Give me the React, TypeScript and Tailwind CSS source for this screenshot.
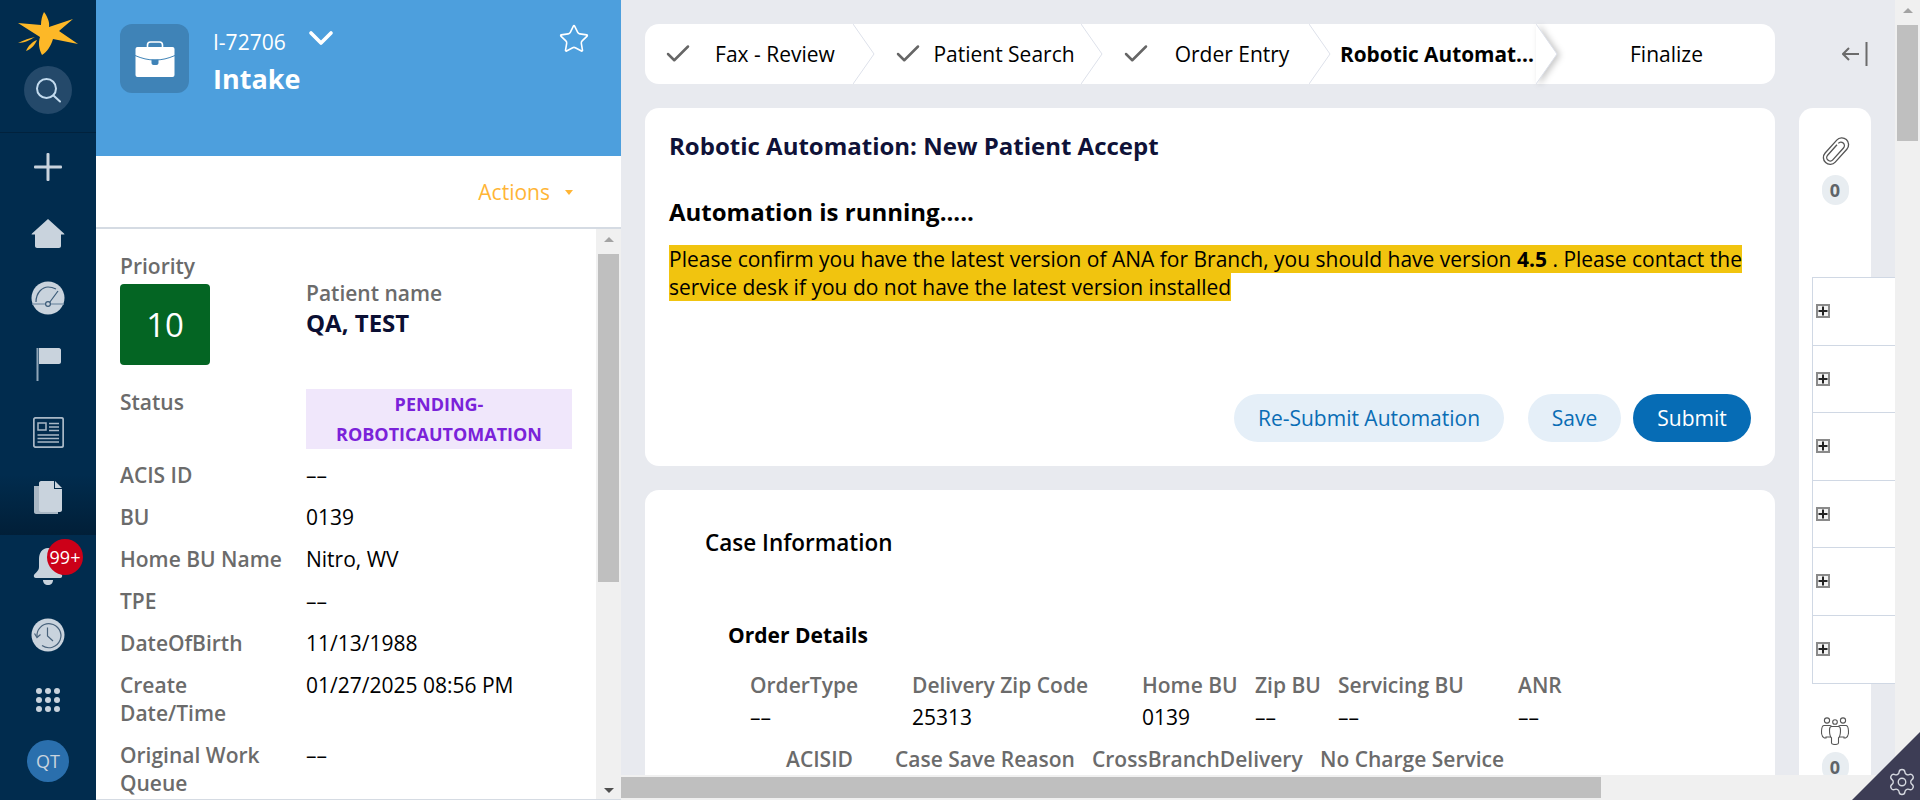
import { Check, ChevronDown, Settings, Star } from "lucide-react"

const navIcon = "#c9d3dd"

function Logo() {
  return (
    <svg width="96" height="66" viewBox="0 0 96 66" fill="#fdb827">
      <path d="M44 12C47 16 50 22 49 27L73 19L59 31L78 44L53 39C51 46 47 52 42 55C39 49 38 43 40 37L18 23L41 25C41 20 42 16 44 12Z" />
      <path d="M18 43C24 40 30 38 35 37C30 40 24 43 18 43Z" />
      <path d="M26 51C28 46 32 42 37 40C35 45 31 49 26 51Z" />
    </svg>
  )
}

function SearchIcon() {
  return (
    <svg width="26" height="26" viewBox="0 0 26 26" fill="none" stroke="#c3dbee" strokeWidth="2">
      <circle cx="11.5" cy="11.5" r="9.5" />
      <path d="M18.5 18.5L25 24.5" strokeLinecap="round" />
    </svg>
  )
}

function PlusIcon() {
  return (
    <svg width="28" height="28" viewBox="0 0 28 28" fill={navIcon}>
      <rect x="12.5" y="0" width="3" height="28" rx="1" />
      <rect x="0" y="12.5" width="28" height="3" rx="1" />
    </svg>
  )
}

function HomeIcon() {
  return (
    <svg width="34" height="29" viewBox="0 0 34 29" fill={navIcon}>
      <path d="M17 0L33 14.5L33.5 15.5H30V27C30 28 29 29 28 29H6C5 29 4 28 4 27V15.5H0.5L1 14.5Z" />
    </svg>
  )
}

function GaugeIcon() {
  return (
    <svg width="34" height="34" viewBox="0 0 34 34">
      <circle cx="17" cy="17" r="16.5" fill={navIcon} />
      <path d="M5 21C5 11 12 6 17 6C20 6 23 7 25 8" fill="none" stroke="#3a5a78" strokeWidth="1.2" />
      <path d="M1 23H33" stroke="#7f96ab" strokeWidth="1.4" />
      <path d="M18.5 21.5L27 10" stroke="#3a5a78" strokeWidth="1.2" />
      <circle cx="17" cy="23" r="2.4" fill={navIcon} stroke="#3a5a78" strokeWidth="1.2" />
    </svg>
  )
}

function FlagIcon() {
  return (
    <svg width="26" height="33" viewBox="0 0 26 33">
      <rect x="0.5" y="0" width="2" height="33" fill="#8fa5b8" />
      <path d="M3 0H23C24 0 25 1 25 2V14C25 15 24 16 23 16H3Z" fill={navIcon} />
    </svg>
  )
}

function NewsIcon() {
  return (
    <svg width="31" height="31" viewBox="0 0 31 31" fill="none" stroke="#a9b8c6" strokeWidth="1.5">
      <rect x="0.8" y="0.8" width="29.4" height="29.4" rx="2" strokeWidth="1.8" />
      <rect x="5" y="6" width="8" height="7" />
      <path d="M16 6.5H26M16 10H26M16 13.5H26M4.5 18H26M4.5 21.5H26M4.5 25H26" />
    </svg>
  )
}

function DocsIcon() {
  return (
    <svg width="29" height="33" viewBox="0 0 29 33">
      <path d="M0 5H6V29H24V33H2C1 33 0 32 0 31Z" fill="#a9b7c4" />
      <path d="M5 2C5 1 6 0 7 0H20V8H28V29C28 30 27 31 26 31H7C6 31 5 30 5 29Z" fill={navIcon} />
      <path d="M21 0L28 7H21Z" fill={navIcon} />
    </svg>
  )
}

function BellIcon() {
  return (
    <svg width="30" height="38" viewBox="0 0 30 38" fill={navIcon}>
      <path d="M15 0C21 0 24 5 24 11V19C24 23 28 25 29 27C29.5 28.5 29 30 27 30H3C1 30 0.5 28.5 1 27C2 25 6 23 6 19V11C6 5 9 0 15 0Z" />
      <path d="M10 32H20C20 35 18 37 15 37C12 37 10 35 10 32Z" />
    </svg>
  )
}

function HistoryIcon() {
  return (
    <svg width="34" height="34" viewBox="0 0 34 34">
      <circle cx="17" cy="17" r="16.5" fill={navIcon} />
      <path d="M6 19A12 12 0 1 1 11 27.5" fill="none" stroke="#48627b" strokeWidth="1.2" />
      <path d="M3.5 15.5L6 19.5L9.5 16.5" fill="none" stroke="#48627b" strokeWidth="1.2" />
      <path d="M16.5 9.5V18L22 23" fill="none" stroke="#48627b" strokeWidth="1.2" />
    </svg>
  )
}

function DotsIcon() {
  return (
    <svg width="26" height="26" viewBox="0 0 26 26" fill={navIcon}>
      {[4, 13, 22].map((y) =>
        [4, 13, 22].map((x) => <circle key={`${x}-${y}`} cx={x} cy={y} r="3" />),
      )}
    </svg>
  )
}

function Briefcase() {
  return (
    <svg width="40" height="36" viewBox="0 0 40 36">
      <path d="M12.5 6V4C12.5 2 14 1 15.5 1H24.5C26 1 27.5 2 27.5 4V6" fill="none" stroke="#fff" strokeWidth="1.6" />
      <rect x="0.5" y="6" width="39" height="30" rx="2" fill="#fff" />
      <path d="M0 14.5C7 17.5 13 19 20 19C27 19 33 17.5 40 14.5" fill="none" stroke="#3f83b7" strokeWidth="1" />
      <path d="M16.5 18.5H23.5V22C23.5 23 22.5 24 21.5 24H18.5C17.5 24 16.5 23 16.5 22Z" fill="#3f83b7" />
    </svg>
  )
}

function Paperclip() {
  return (
    <svg width="32" height="32" viewBox="0 0 24 24" fill="none" stroke="#555" strokeWidth="1">
      <g transform="rotate(42 12 12)">
        <path d="M9.5 7V17.5A2.6 2.6 0 0 0 14.7 17.5V5.5A2.6 2.6 0 0 0 9.5 5.5" />
        <path d="M7 6V17.5A5.1 5.1 0 0 0 17.2 17.5V4.5A5.1 5.1 0 0 0 7 4.5V6" />
      </g>
    </svg>
  )
}

function People() {
  return (
    <svg width="28" height="28" viewBox="0 0 28 28" fill="#fff" stroke="#555" strokeWidth="1.1">
      <circle cx="6" cy="3.5" r="2.6" />
      <circle cx="22" cy="3.5" r="2.6" />
      <circle cx="14" cy="5" r="2.3" />
      <path d="M3 8.5H9C10 8.5 10.5 9 10.5 10V20H5V21H3.5C1.5 20 0.5 18 0.5 15.5C0.5 11 1 8.5 3 8.5Z" />
      <path d="M25 8.5H19C18 8.5 17.5 9 17.5 10V20H23V21H24.5C26.5 20 27.5 18 27.5 15.5C27.5 11 27 8.5 25 8.5Z" />
      <path d="M10.5 9.5H17.5C19 9.5 19.5 11 19.5 13C19.5 17 18.5 20 17.5 21V26C17.5 27 16.5 27.5 14 27.5C11.5 27.5 10.5 27 10.5 26V21C9.5 20 8.5 17 8.5 13C8.5 11 9 9.5 10.5 9.5Z" />
    </svg>
  )
}

function PlusBox() {
  return (
    <div className="flex h-[14px] w-[14px] items-center justify-center border-2 border-[#8a8a8a] bg-[#f2f2f2]">
      <svg width="10" height="10" viewBox="0 0 10 10" fill="#222">
        <rect x="4" y="0.5" width="2" height="9" />
        <rect x="0.5" y="4" width="9" height="2" />
      </svg>
    </div>
  )
}

function ArrowUp() {
  return <div className="h-0 w-0 border-x-[5px] border-b-[5px] border-x-transparent border-b-[#a3a3a3]" />
}

function ArrowDown() {
  return <div className="h-0 w-0 border-x-[5px] border-t-[5px] border-x-transparent border-t-[#505050]" />
}

function Chevron({ shadow = false }: { shadow?: boolean }) {
  return (
    <svg
      width="22"
      height="60"
      viewBox="0 0 22 60"
      className={`absolute top-0 right-0 z-10 ${shadow ? "drop-shadow-[3px_1px_3px_rgba(0,0,0,0.22)]" : ""}`}
    >
      <path d="M0 0L21 30L0 60" fill="#fff" stroke="#dde1ea" strokeWidth="1" />
    </svg>
  )
}

function Step({ label, width }: { label: string; width: string }) {
  return (
    <div className={`relative flex h-full items-center pl-[18px] ${width}`}>
      <Check size={30} strokeWidth={2} className="shrink-0 text-[#666666]" />
      <span className="flex-1 pr-[18px] text-center whitespace-nowrap">{label}</span>
      <Chevron />
    </div>
  )
}

function Badge() {
  return (
    <div className="mt-[7px] flex h-[30px] w-[27px] items-center justify-center rounded-full bg-[#e8edf1] text-[18px] font-bold text-[#5f6468]">
      0
    </div>
  )
}

const details: { label: string[]; value: string }[] = [
  { label: ["ACIS ID"], value: "––" },
  { label: ["BU"], value: "0139" },
  { label: ["Home BU Name"], value: "Nitro, WV" },
  { label: ["TPE"], value: "––" },
  { label: ["DateOfBirth"], value: "11/13/1988" },
  { label: ["Create", "Date/Time"], value: "01/27/2025 08:56 PM" },
  { label: ["Original Work", "Queue"], value: "––" },
]

const orderRow = [
  { label: "OrderType", value: "––", w: "w-[162px]" },
  { label: "Delivery Zip Code", value: "25313", w: "w-[230px]" },
  { label: "Home BU", value: "0139", w: "w-[113px]" },
  { label: "Zip BU", value: "––", w: "w-[83px]" },
  { label: "Servicing BU", value: "––", w: "w-[180px]" },
  { label: "ANR", value: "––", w: "w-[60px]" },
]

const secondRow = [
  { label: "ACISID", w: "w-[109px]" },
  { label: "Case Save Reason", w: "w-[197px]" },
  { label: "CrossBranchDelivery", w: "w-[228px]" },
  { label: "No Charge Service", w: "w-[220px]" },
]

export default function App() {
  return (
    <div className="relative flex h-[800px] w-[1920px] overflow-hidden bg-[#e8eaef] font-['Open_Sans',sans-serif] text-[21px] leading-[28px] text-black">
      {/* nav */}
      <aside className="flex h-full w-[96px] shrink-0 flex-col bg-[#012c4e]">
        <div className="flex h-[133px] shrink-0 flex-col items-center border-b border-[#01223d]">
          <Logo />
          <div className="flex h-[48px] w-[48px] items-center justify-center rounded-full bg-[#24496a]">
            <SearchIcon />
          </div>
        </div>
        <div className="flex h-[402px] shrink-0 flex-col items-center bg-gradient-to-b from-[#012c4e] from-85% to-[#011f38] pt-[20px]">
          <div className="flex h-[28px] items-center">
            <PlusIcon />
          </div>
          <div className="mt-[38px]">
            <HomeIcon />
          </div>
          <div className="mt-[33px]">
            <GaugeIcon />
          </div>
          <div className="mt-[33px] ml-[1px]">
            <FlagIcon />
          </div>
          <div className="mt-[36px]">
            <NewsIcon />
          </div>
          <div className="mt-[33px]">
            <DocsIcon />
          </div>
        </div>
        <div className="flex flex-1 flex-col items-center">
          <div className="relative mt-[13px] h-[38px]">
            <BellIcon />
            <div className="absolute top-[-9px] left-[14px] flex h-[36px] w-[36px] items-center justify-center rounded-full bg-[#cc0018] text-[18px] text-white">
              99+
            </div>
          </div>
          <div className="mt-[32px]">
            <HistoryIcon />
          </div>
          <div className="mt-[35px]">
            <DotsIcon />
          </div>
          <div className="mt-[27px] flex h-[42px] w-[42px] items-center justify-center rounded-full bg-[#2a6fad] text-[18px] text-[#c9d3dd]">
            QT
          </div>
        </div>
      </aside>

      {/* case summary */}
      <section className="flex h-full w-[525px] shrink-0 flex-col bg-white">
        <div className="flex h-[156px] shrink-0 items-start bg-[#4d9fdd] pt-[24px] pl-[24px] text-white">
          <div className="flex h-[69px] w-[69px] items-center justify-center rounded-[12px] bg-[#3f83b7]">
            <Briefcase />
          </div>
          <div className="ml-[24px]">
            <div className="flex h-[36px] items-center">
              I-72706
              <ChevronDown size={40} strokeWidth={2.2} className="mt-[-8px] ml-[15px]" />
            </div>
            <div className="mt-[1px] text-[27px] leading-[36px] font-bold">Intake</div>
          </div>
          <Star size={32} strokeWidth={1.2} className="mt-[-1px] mr-[31px] ml-auto" />
        </div>
        <div className="flex h-[73px] shrink-0 items-center justify-end border-b-2 border-[#d5dbe3] pr-[48px] text-[#ffb536]">
          Actions
          <div className="mt-[2px] ml-[15px] h-0 w-0 border-x-[4px] border-t-[5px] border-x-transparent border-t-[#ffb536]" />
        </div>
        <div className="flex min-h-0 flex-1 border-b border-[#d5dbe3]">
          <div className="w-[500px] shrink-0 overflow-hidden pt-[23px] pl-[24px] font-semibold text-[#6b6b6b]">
            <div className="flex w-[452px]">
              <div className="w-[186px]">
                <div>Priority</div>
                <div className="mt-[4px] flex h-[81px] w-[90px] items-center justify-center rounded-[4px] bg-[#046523] text-[33px] font-medium text-white">
                  10
                </div>
              </div>
              <div className="pt-[27px]">
                <div>Patient name</div>
                <div className="text-[24px] leading-[32px] font-bold text-[#0b0f33]">QA, TEST</div>
              </div>
            </div>
            <div className="mt-[24px] flex w-[452px]">
              <div className="mt-[-1px] w-[186px]">Status</div>
              <div className="w-[266px] bg-[#f0e7fb] text-center text-[18px] leading-[30px] font-bold text-[#7a22d9]">
                PENDING-
                <br />
                ROBOTICAUTOMATION
              </div>
            </div>
            <div className="mt-[12px] flex flex-col gap-[14px]">
              {details.map((row) => (
                <div key={row.label[0]} className="flex w-[452px]">
                  <div className="w-[186px]">
                    {row.label.map((line) => (
                      <div key={line}>{line}</div>
                    ))}
                  </div>
                  <div className="font-normal text-black">{row.value}</div>
                </div>
              ))}
            </div>
          </div>
          <div className="relative flex w-[25px] shrink-0 flex-col items-center bg-[#f0f0f0] pt-[25px]">
            <div className="absolute top-[8px]">
              <ArrowUp />
            </div>
            <div className="h-[328px] w-[21px] bg-[#bfbfbf]" />
            <div className="absolute bottom-[6px]">
              <ArrowDown />
            </div>
          </div>
        </div>
      </section>

      {/* workspace */}
      <main className="flex min-w-0 flex-1 flex-col">
        <div className="min-h-0 flex-1 overflow-hidden pt-[24px] pl-[24px]">
          <div className="flex items-center">
            <div className="flex h-[60px] w-[1130px] shrink-0 rounded-[14px] bg-white">
              <Step label="Fax - Review" width="w-[230px]" />
              <Step label="Patient Search" width="w-[228px]" />
              <Step label="Order Entry" width="w-[228px]" />
              <div className="relative flex h-full w-[227px] items-center pl-[9px] text-[20.8px] font-bold whitespace-nowrap">
                Robotic Automat...
                <Chevron shadow />
              </div>
              <div className="flex flex-1 items-center justify-center">Finalize</div>
            </div>
            <svg width="26" height="26" viewBox="0 0 26 26" fill="none" stroke="#6b6b6b" strokeWidth="2" className="ml-[67px]">
              <path d="M1 13H17M7 7L1 13L7 19" />
              <path d="M24.5 1V25" />
            </svg>
          </div>

          <div className="mt-[24px] flex gap-[24px]">
            <div className="flex w-[1130px] shrink-0 flex-col gap-[24px]">
              <div className="flex h-[358px] flex-col rounded-[14px] bg-white px-[24px] pt-[23px]">
                <h1 className="text-[24px] leading-[30px] font-bold text-[#0f1238]">
                  Robotic Automation: New Patient Accept
                </h1>
                <h2 className="mt-[36px] text-[24px] leading-[30px] font-bold">Automation is running.....</h2>
                <p className="mt-[18px] w-[1078px]">
                  <span className="bg-[#f1c40f]">
                    Please confirm you have the latest version of ANA for Branch, you should have version{" "}
                    <b>4.5</b> . Please contact the service desk if you do not have the latest version installed
                  </span>
                </p>
                <div className="mt-auto mb-[24px] flex justify-end">
                  <button className="h-[48px] w-[270px] rounded-full bg-[#e5eff8] text-[#0a6db5]">Re-Submit Automation</button>
                  <button className="ml-[24px] h-[48px] w-[93px] rounded-full bg-[#e5eff8] text-[#0a6db5]">Save</button>
                  <button className="ml-[12px] h-[48px] w-[118px] rounded-full bg-[#066cb5] text-white">Submit</button>
                </div>
              </div>

              <div className="h-[400px] rounded-[14px] bg-white pt-[39px] pl-[60px]">
                <h3 className="text-[22.5px] leading-[28px] font-semibold">Case Information</h3>
                <h4 className="mt-[64px] ml-[23px] leading-[28px] font-bold">Order Details</h4>
                <div className="mt-[22px] ml-[45px] flex whitespace-nowrap">
                  {orderRow.map((col) => (
                    <div key={col.label} className={`${col.w} shrink-0`}>
                      <div className="font-semibold text-[#6b6b6b]">{col.label}</div>
                      <div className="mt-[4px]">{col.value}</div>
                    </div>
                  ))}
                </div>
                <div className="mt-[14px] ml-[81px] flex font-semibold whitespace-nowrap text-[#6b6b6b]">
                  {secondRow.map((col) => (
                    <div key={col.label} className={`${col.w} shrink-0`}>
                      {col.label}
                    </div>
                  ))}
                </div>
              </div>
            </div>

            {/* rail */}
            <div className="relative flex h-[700px] w-[72px] shrink-0 flex-col items-center rounded-t-[14px] bg-white pt-[28px]">
              <Paperclip />
              <Badge />
              <div className="mt-[512px]">
                <People />
              </div>
              <Badge />
              <div className="absolute top-[169px] left-[13px] w-[83px] border-y border-l border-[#d0d8e4] bg-white">
                {[0, 1, 2, 3, 4, 5].map((i) => (
                  <div
                    key={i}
                    className="flex h-[67.5px] items-center border-b border-[#d0d8e4] pl-[3px] last:border-b-0"
                  >
                    <PlusBox />
                  </div>
                ))}
              </div>
            </div>
          </div>
        </div>

        {/* bottom scrollbar */}
        <div className="flex h-[25px] shrink-0 items-center bg-[#f0f0f0]">
          <div className="h-[21px] w-[980px] bg-[#bfbfbf]" />
        </div>
      </main>

      {/* page scrollbar */}
      <div className="relative flex h-full w-[25px] shrink-0 flex-col items-center bg-[#f0f0f0] pt-[25px]">
        <div className="absolute top-[8px]">
          <ArrowUp />
        </div>
        <div className="h-[116px] w-[21px] bg-[#bfbfbf]" />
      </div>

      {/* corner settings tab */}
      <div className="absolute right-0 bottom-0 flex h-[68px] w-[68px] items-end justify-end bg-[#3d3d55] p-[3px] [clip-path:polygon(100%_0,100%_100%,0_100%)]">
        <Settings size={30} strokeWidth={1.1} className="text-[#d5d8df]" />
      </div>
    </div>
  )
}
